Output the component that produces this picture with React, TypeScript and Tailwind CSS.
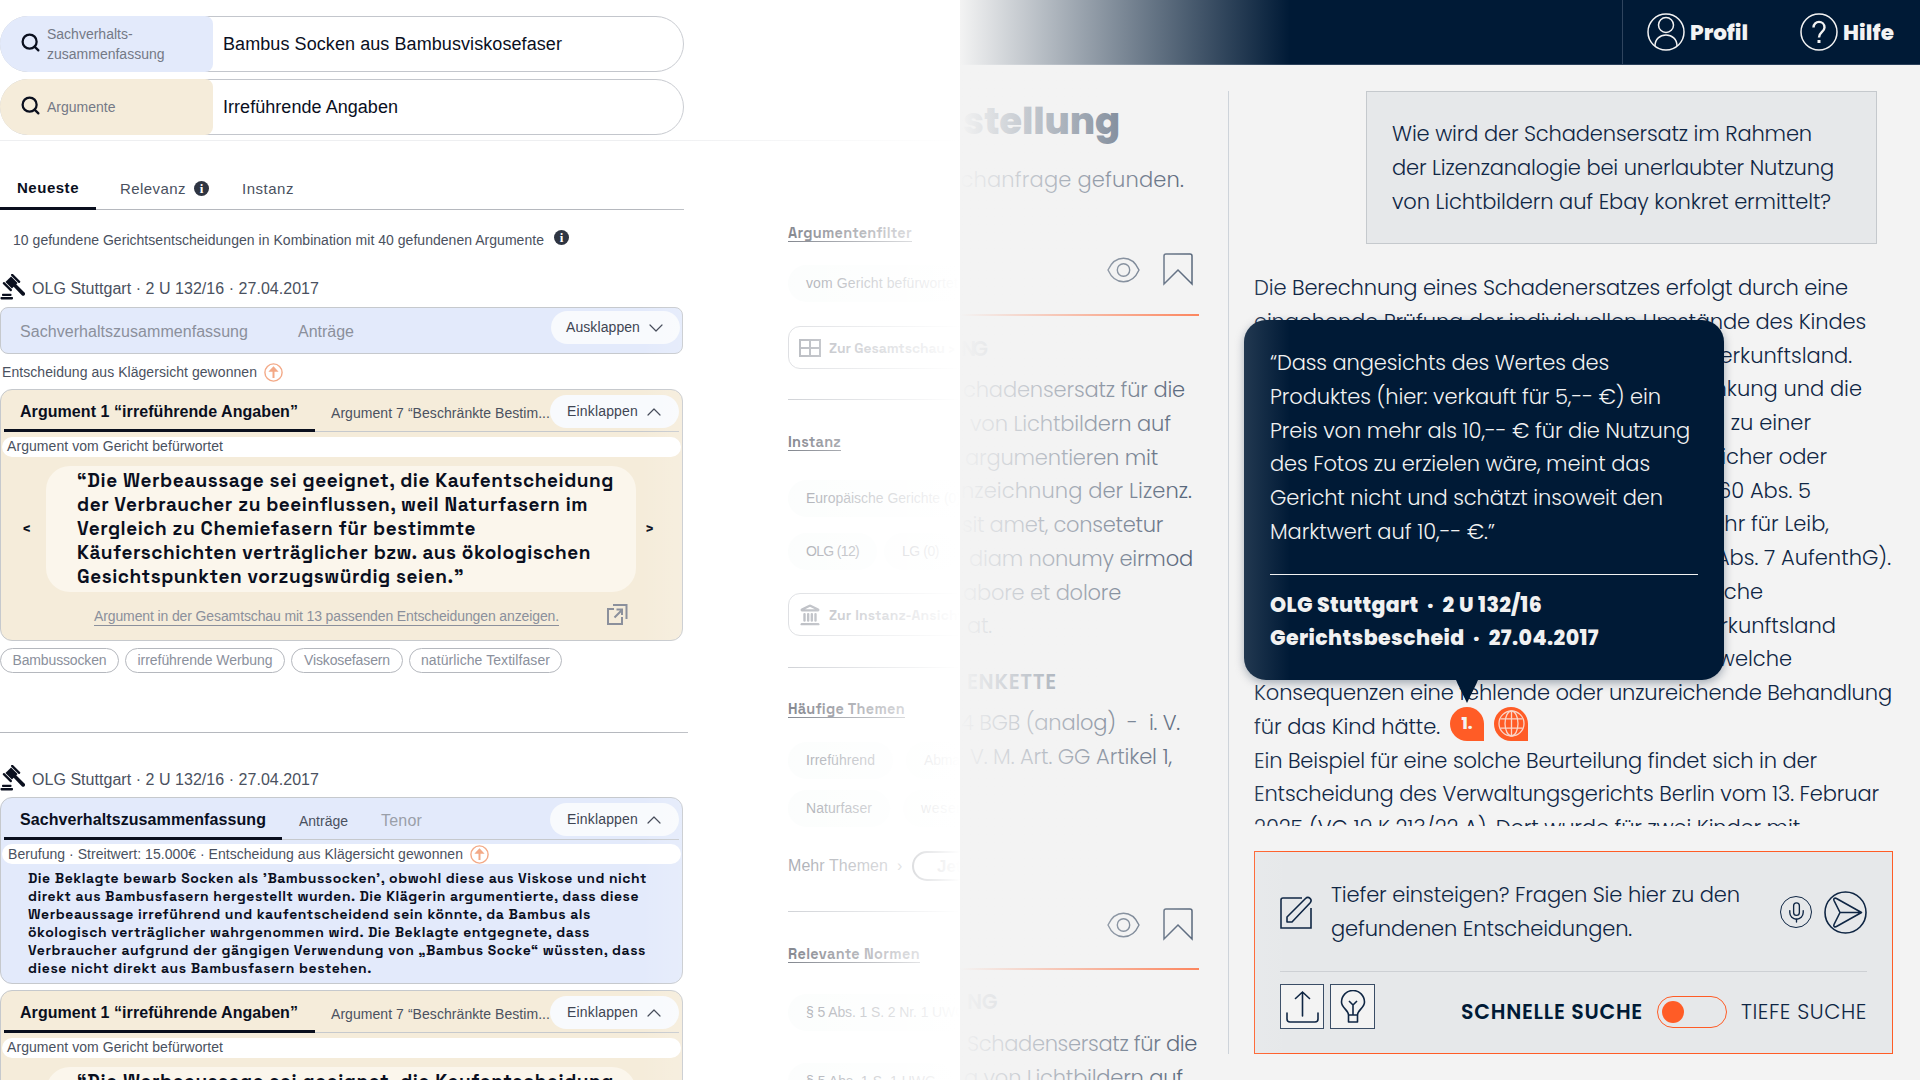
import { useLayoutEffect, useRef, useState, type ReactNode } from 'react';
import { Info, Search, ChevronDown, ChevronUp, Landmark, Mic } from 'lucide-react';

// One line of copy, tracked so that it fills the given width
function Line({ w, className = '', children }: { w: number; className?: string; children: ReactNode }) {
  const ref = useRef<HTMLSpanElement>(null);
  const [tracking, setTracking] = useState(0);

  useLayoutEffect(() => {
    const el = ref.current;
    if (!el) return;
    el.style.letterSpacing = '0px';
    const gap = w - el.getBoundingClientRect().width;
    setTracking(gap / (el.textContent?.length || 1));
  }, [w]);

  return (
    <span className={`block whitespace-pre ${className}`}>
      <span ref={ref} style={{ letterSpacing: `${tracking}px` }}>
        {children}
      </span>
    </span>
  );
}

type TextLine = [string, number];

const quoteLines: TextLine[] = [
  ['“Die Werbeaussage sei geeignet, die Kaufentscheidung', 537],
  ['der Verbraucher zu beeinflussen, weil Naturfasern im', 511],
  ['Vergleich zu Chemiefasern für bestimmte', 399],
  ['Käuferschichten verträglicher bzw. aus ökologischen', 514],
  ['Gesichtspunkten vorzugswürdig seien.”', 387],
];

const summaryLines: TextLine[] = [
  ['Die Beklagte bewarb Socken als ’Bambussocken’, obwohl diese aus Viskose und nicht', 619],
  ['direkt aus Bambusfasern hergestellt wurden. Die Klägerin argumentierte, dass diese', 611],
  ['Werbeaussage irreführend und kaufentscheidend sein könnte, da Bambus als', 563],
  ['ökologisch verträglicher wahrgenommen wird. Die Beklagte entgegnete, dass', 562],
  ['Verbraucher aufgrund der gängigen Verwendung von „Bambus Socke“ wüssten, dass', 618],
  ['diese nicht direkt aus Bambusfasern bestehen.', 344],
];

const tags: { label: string; w: number; box: string }[] = [
  { label: 'Bambussocken', w: 94, box: 'w-[119px]' },
  { label: 'irreführende Werbung', w: 135, box: 'w-[160px]' },
  { label: 'Viskosefasern', w: 86, box: 'w-[112px]' },
  { label: 'natürliche Textilfaser', w: 129, box: 'w-[153px]' },
];

const questionLines: TextLine[] = [
  ['Wie wird der Schadensersatz im Rahmen', 420],
  ['der Lizenzanalogie bei unerlaubter Nutzung', 442],
  ['von Lichtbildern auf Ebay konkret ermittelt?', 439],
];

const popupLines: TextLine[] = [
  ['“Dass angesichts des Wertes des', 339],
  ['Produktes (hier: verkauft für 5,-- €) ein', 391],
  ['Preis von mehr als 10,-- € für die Nutzung', 420],
  ['des Fotos zu erzielen wäre, meint das', 380],
  ['Gericht nicht und schätzt insoweit den', 393],
  ['Marktwert auf 10,-- €.”', 225],
];

// Lines that run behind the popup, right edge measured from the column start
const coveredLines: { text: string; width: string }[] = [
  { text: 'Herkunftsland.', width: 'w-[598px]' },
  { text: 'Erkrankung und die', width: 'w-[608px]' },
  { text: 'und zu einer', width: 'w-[557px]' },
  { text: 'erheblicher oder', width: 'w-[573px]' },
  { text: '§ 60 Abs. 5', width: 'w-[557px]' },
  { text: 'Gefahr für Leib,', width: 'w-[575px]' },
  { text: 'Abs. 7 AufenthG).', width: 'w-[637px]' },
  { text: 'solche', width: 'w-[509px]' },
  { text: 'Herkunftsland', width: 'w-[582px]' },
  { text: 'welche', width: 'w-[538px]' },
];

const excerptLines: { text: string; w: number; pad: string }[] = [
  { text: 'chadensersatz für die', w: 222, pad: 'pl-[3px]' },
  { text: 'von Lichtbildern auf', w: 201, pad: 'pl-[10px]' },
  { text: 'argumentieren mit', w: 193, pad: 'pl-[5px]' },
  { text: 'nzeichnung der Lizenz.', w: 231, pad: 'pl-[1px]' },
  { text: 'sit amet, consetetur', w: 201, pad: 'pl-[2px]' },
  { text: 'diam nonumy eirmod', w: 224, pad: 'pl-[9px]' },
  { text: 'abore et dolore', w: 158, pad: 'pl-[3px]' },
  { text: 'at.', w: 25, pad: 'pl-[7px]' },
];

function GavelIcon() {
  return (
    <svg className="h-[26px] w-[25px] shrink-0" viewBox="0 0 25 26" fill="#0a0f1e">
      <rect x="0.500" y="23" width="12.500" height="2.400" rx="0.800" />
      <rect x="2" y="19.800" width="9.500" height="2.200" rx="0.800" />
      <g transform="translate(11.5 8.5) rotate(-45)">
        <rect x="-4" y="-4.600" width="8" height="9.200" />
        <rect x="-7" y="-6" width="2.300" height="12" rx="1" />
        <rect x="4.700" y="-6" width="2.300" height="12" rx="1" />
      </g>
      <path d="M13 12l2.500-2.500 9 9a1.900 1.900 0 0 1-2.700 2.700z" />
    </svg>
  );
}

function InfoDot() {
  return (
    <span className="flex size-[15px] items-center justify-center rounded-full bg-[#2f3542] font-['Liberation_Serif',serif] text-[13px] leading-none font-bold text-white">
      i
    </span>
  );
}

function UpIcon() {
  return (
    <svg className="size-[19px]" viewBox="0 0 19 19" fill="none" stroke="#f3a987" strokeWidth="1.4">
      <circle cx="9.5" cy="9.5" r="8.6" />
      <path d="M9.5 15V5" strokeWidth="2" />
      <path d="M6 8l3.500-3.800L13 8z" fill="#f3a987" />
    </svg>
  );
}

function ExternalIcon() {
  return (
    <svg className="size-[22px]" viewBox="0 0 22 22" fill="none" stroke="#8b909c" strokeWidth="2">
      <path d="M8 5H2v15h14v-7" />
      <path d="M7 1h13.500v14M8.500 13.500L16 6M10.500 5.500H16V11" />
    </svg>
  );
}

function EyeIcon() {
  return (
    <svg className="h-[26px] w-[33px]" viewBox="0 0 33 26" fill="none" stroke="#1a2f4b" strokeWidth="1.4">
      <path d="M1 13C4.500 5.200 10 1.200 16.500 1.200S28.500 5.200 32 13C28.500 20.800 23 24.800 16.500 24.800S4.500 20.800 1 13z" />
      <circle cx="16.500" cy="13" r="6.200" />
    </svg>
  );
}

function BookmarkIcon() {
  return (
    <svg className="h-[33px] w-[30px]" viewBox="0 0 30 33" fill="none" stroke="#1a2f4b" strokeWidth="1.5">
      <path d="M1 31V3a2 2 0 0 1 2-2h24a2 2 0 0 1 2 2v28L15 17z" />
    </svg>
  );
}

function SearchBar({ label, value, w, tone }: { label: ReactNode; value: string; w: number; tone: string }) {
  return (
    <div className="flex h-[56px] w-[684px] items-center rounded-full border border-[#c3c6cc]">
      <div className={`-my-px -ml-px flex h-[56px] w-[213px] shrink-0 items-center gap-[6px] rounded-l-[28px] rounded-r-[8px] pl-[20px] ${tone}`}>
        <Search className="mb-[3px] size-[21px] text-[#0a0f1e]" strokeWidth={2.6} />
        <span className="text-[14px] leading-[20px] text-[#747986]">{label}</span>
      </div>
      <Line w={w} className="pl-[10px] text-[18px] leading-[24px] text-[#0a0f1e]">{value}</Line>
    </div>
  );
}

function CaseTitle() {
  return (
    <div className="flex h-[26px] items-center">
      <GavelIcon />
      <Line w={287} className="pl-[7px] pt-[3px] text-[16px] leading-[24px] text-[#4a5160]">
        OLG Stuttgart · 2 U 132/16 · 27.04.2017
      </Line>
    </div>
  );
}

function ToggleButton({ open }: { open: boolean }) {
  return (
    <div className="mr-[3px] ml-auto flex h-[33px] w-[129px] shrink-0 items-center rounded-full bg-[#f8fafd] pl-[17px] text-[14px] text-[#3f4553]">
      <Line w={open ? 71 : 74} className={open ? '' : '-ml-[2px]'}>{open ? 'Einklappen' : 'Ausklappen'}</Line>
      {open ? (
        <ChevronUp className="ml-[4px] size-[24px]" strokeWidth={1.2} />
      ) : (
        <ChevronDown className="ml-[4px] size-[24px]" strokeWidth={1.2} />
      )}
    </div>
  );
}

function ArgumentCard() {
  return (
    <div className="h-[252px] w-[683px] rounded-[12px] border border-[#c6c9cd] bg-[#f5ecda]">
      <div className="mr-[3px] ml-[3px] flex h-[42px] border-b border-[#c6c9cd]">
        <div className="h-[42px] w-[311px] border-b-[3px] border-[#0a0f1e] pt-[12px] pl-[16px]">
          <Line w={278} className="text-[16px] leading-[20px] font-bold text-[#0a0f1e]">
            Argument 1 “irreführende Angaben”
          </Line>
        </div>
        <Line w={219} className="pt-[13px] pl-[16px] text-[14px] leading-[20px] text-[#4a5160]">
          Argument 7 “Beschränkte Bestim...
        </Line>
        <div className="-mr-[3px] ml-auto pt-[5px]">
          <ToggleButton open />
        </div>
      </div>
      <div className="mx-[1px] mt-[5px] h-[20px] rounded-full bg-white pl-[5px]">
        <Line w={216} className="text-[14px] leading-[19px] text-[#4a5160]">Argument vom Gericht befürwortet</Line>
      </div>
      <div className="mt-[9px] flex items-center font-['Space_Grotesk','Inter',sans-serif] font-bold text-[#0a0f1e]">
        <span className="w-[45px] pl-[21px] text-[15px]">&lt;</span>
        <div className="h-[126px] w-[590px] rounded-[24px] bg-[#fbf6ec] pt-[3px] pl-[31px] text-[19px] leading-[24.100px]">
          {quoteLines.map(([text, w]) => (
            <Line key={text} w={w}>{text}</Line>
          ))}
        </div>
        <span className="pl-[9px] text-[15px]">&gt;</span>
      </div>
      <div className="mt-[12px] flex items-start pl-[93px]">
        <Line w={465} className="pt-[2px] text-[14px] leading-[20px] text-[#8b909c] underline underline-offset-[4px]">
          Argument in der Gesamtschau mit 13 passenden Entscheidungen anzeigen.
        </Line>
        <span className="ml-[47px]">
          <ExternalIcon />
        </span>
      </div>
    </div>
  );
}

function Results() {
  return (
    <div className="w-[688px] shrink-0">
      <div className="mt-[36px] flex h-[33px] w-[684px] border-b border-[#b5b8be] text-[15px] leading-[20px]">
        <div className="h-[33px] w-[96px] border-b-[3px] border-[#0a0f1e] pt-[1px] pl-[17px]">
          <Line w={62} className="font-bold text-[#0a0f1e]">Neueste</Line>
        </div>
        <div className="flex pt-[2px] pl-[24px] text-[#4a5160]">
          <Line w={66}>Relevanz</Line>
          <span className="mt-[2px] ml-[8px]">
            <InfoDot />
          </span>
          <Line w={52} className="pl-[33px]">Instanz</Line>
        </div>
      </div>
      <div className="mt-[20px] flex h-[20px] pl-[13px]">
        <Line w={531} className="text-[14px] leading-[20px] text-[#4a5160]">
          10 gefundene Gerichtsentscheidungen in Kombination mit 40 gefundenen Argumente
        </Line>
        <span className="ml-[10px]">
          <InfoDot />
        </span>
      </div>
      <div className="mt-[24px]">
        <CaseTitle />
      </div>
      <div className="mt-[7px] flex h-[47px] w-[683px] rounded-[8px] border border-[#c6c9cd] bg-[#e3eafb]">
        <Line w={228} className="pt-[14px] pl-[19px] text-[16px] leading-[20px] text-[#8b909c]">
          Sachverhaltszusammenfassung
        </Line>
        <Line w={56} className="pt-[14px] pl-[50px] text-[16px] leading-[20px] text-[#8b909c]">Anträge</Line>
        <div className="-mr-[1px] ml-auto pt-[3px]">
          <ToggleButton open={false} />
        </div>
      </div>
      <div className="mt-[8px] flex h-[20px] items-center gap-[7px] pl-[2px]">
        <Line w={255} className="text-[14px] leading-[20px] text-[#4a5160]">Entscheidung aus Klägersicht gewonnen</Line>
        <UpIcon />
      </div>
      <div className="mt-[7px]">
        <ArgumentCard />
      </div>
      <div className="mt-[7px] flex gap-[6px]">
        {tags.map((tag) => (
          <div key={tag.label} className={`flex h-[25px] justify-center rounded-full border border-[#b5b8be] ${tag.box}`}>
            <Line w={tag.w} className="text-[14px] leading-[22px] text-[#8b909c]">{tag.label}</Line>
          </div>
        ))}
      </div>
      <div className="mt-[59px] border-t border-[#b5b8be]" />
      <div className="mt-[32px]">
        <CaseTitle />
      </div>
      <div className="mt-[6px] h-[187px] w-[683px] rounded-[12px] border border-[#c6c9cd] bg-[#e3eafb]">
        <div className="mr-[3px] ml-[3px] flex h-[42px] border-b border-[#c6c9cd]">
          <div className="h-[42px] w-[278px] border-b-[3px] border-[#0a0f1e] pt-[12px] pl-[16px]">
            <Line w={246} className="text-[16px] leading-[20px] font-bold text-[#0a0f1e]">
              Sachverhaltszusammenfassung
            </Line>
          </div>
          <Line w={49} className="pt-[13px] pl-[17px] text-[14px] leading-[20px] text-[#4a5160]">Anträge</Line>
          <Line w={41} className="pt-[13px] pl-[33px] text-[16px] leading-[20px] text-[#9a9fa9]">Tenor</Line>
          <div className="-mr-[3px] ml-auto pt-[5px]">
            <ToggleButton open />
          </div>
        </div>
        <div className="mx-[1px] mt-[4px] flex h-[20px] items-center gap-[7px] rounded-full bg-white pl-[6px]">
          <Line w={455} className="text-[14px] leading-[20px] text-[#4a5160]">
            Berufung · Streitwert: 15.000€ · Entscheidung aus Klägersicht gewonnen
          </Line>
          <UpIcon />
        </div>
        <div className="pt-[5px] pl-[27px] font-['Space_Grotesk','Inter',sans-serif] text-[14px] leading-[18.100px] font-bold text-[#0a0f1e]">
          {summaryLines.map(([text, w]) => (
            <Line key={text} w={w}>{text}</Line>
          ))}
        </div>
      </div>
      <div className="mt-[6px]">
        <ArgumentCard />
      </div>
    </div>
  );
}

function FilterHeading({ children, w }: { children: string; w: number }) {
  return (
    <Line w={w} className="font-['Space_Grotesk','Inter',sans-serif] text-[14.500px] leading-[20px] font-bold text-[#1a2130] underline underline-offset-[3px]">
      {children}
    </Line>
  );
}

function Chip({ children, w }: { children: string; w: number }) {
  return (
    <div className="h-[37px] shrink-0 rounded-full bg-[#f9fcfb] px-[18px]">
      <Line w={w} className="text-[14px] leading-[37px] text-[#5f6571]">{children}</Line>
    </div>
  );
}

function FilterButton({ icon, children, w }: { icon: ReactNode; children: string; w: number }) {
  return (
    <div className="flex h-[43px] w-[220px] items-center gap-[8px] rounded-[12px] border-[1.500px] border-[#c3c6cc] pl-[10px] text-[#7c818c]">
      {icon}
      <Line w={w} className="font-['Space_Grotesk','Inter',sans-serif] text-[14px] leading-[20px] font-bold">{children}</Line>
    </div>
  );
}

function Filters() {
  return (
    <div className="ml-[100px] h-[939px] w-[172px] overflow-hidden whitespace-nowrap">
      <div className="pt-[82px]">
        <FilterHeading w={124}>Argumentenfilter</FilterHeading>
      </div>
      <div className="mt-[22px] flex">
        <Chip w={152}>vom Gericht befürwortet</Chip>
      </div>
      <div className="mt-[24px]">
        <FilterButton
          w={126}
          icon={
            <svg className="h-[18px] w-[22px] shrink-0" viewBox="0 0 22 18" fill="none" stroke="currentColor" strokeWidth="2">
              <path d="M1 1h20v16H1zM11 1v16M1 9h20" />
            </svg>
          }
        >
          Zur Gesamtschau ›
        </FilterButton>
      </div>
      <div className="mt-[30px] border-t-[1.500px] border-[#a9adb5]" />
      <div className="mt-[32px]">
        <FilterHeading w={53}>Instanz</FilterHeading>
      </div>
      <div className="mt-[28px] flex">
        <Chip w={155}>Europäische Gerichte (0)</Chip>
      </div>
      <div className="mt-[16px] flex gap-[7px]">
        <Chip w={53}>OLG (12)</Chip>
        <Chip w={37}>LG (0)</Chip>
      </div>
      <div className="mt-[23px]">
        <FilterButton w={135} icon={<Landmark className="size-[22px] shrink-0" strokeWidth={2.6} />}>
          Zur Instanz-Ansicht
        </FilterButton>
      </div>
      <div className="mt-[31px] border-t-[1.500px] border-[#a9adb5]" />
      <div className="mt-[31px]">
        <FilterHeading w={117}>Häufige Themen</FilterHeading>
      </div>
      <div className="mt-[23px] flex gap-[13px]">
        <Chip w={69}>Irreführend</Chip>
        <Chip w={74}>Abmahnung</Chip>
      </div>
      <div className="mt-[11px] flex gap-[13px]">
        <Chip w={66}>Naturfaser</Chip>
        <Chip w={72}>wesentlich</Chip>
      </div>
      <div className="mt-[24px] flex h-[30px] items-center">
        <Line w={100} className="text-[16px] text-[#5f6571]">Mehr Themen</Line>
        <span className="w-[24px] shrink-0 pl-[9px] text-[16px] text-[#5f6571]">›</span>
        <div className="h-[30px] w-[110px] shrink-0 rounded-full border-2 border-[#1a2130] pl-[23px] text-[17px] leading-[27px] font-bold text-[#1a2130]">
          Jetzt
        </div>
      </div>
      <div className="mt-[30px] border-t-[1.500px] border-[#a9adb5]" />
      <div className="mt-[32px]">
        <FilterHeading w={132}>Relevante Normen</FilterHeading>
      </div>
      <div className="mt-[30px] flex">
        <Chip w={160}>§ 5 Abs. 1 S. 2 Nr. 1 UWG</Chip>
      </div>
      <div className="mt-[32px] flex">
        <Chip w={130}>§ 5 Abs. 1 S. 1 UWG</Chip>
      </div>
    </div>
  );
}

function ExcerptActions() {
  return (
    <div className="flex items-center gap-[23px] pl-[147px]">
      <EyeIcon />
      <BookmarkIcon />
    </div>
  );
}

function Excerpt() {
  return (
    <div className="h-[1015px] w-[268px] shrink-0 overflow-hidden text-[#0f2644]">
      <Line w={157} className="pt-[28px] pl-[3px] text-[37px] leading-[56px] font-extrabold">stellung</Line>
      <Line w={237} className="-ml-[13px] pt-[14px] leading-[34px]">uchanfrage gefunden.</Line>
      <div className="mt-[56px]">
        <ExcerptActions />
      </div>
      <div className="mt-[28px] h-[2px] w-[239px] bg-[#ff5c26]" />
      <div className="mt-[16px] pl-[1px] text-[20.500px] leading-[34px] font-semibold opacity-60">
        <Line w={23}>NG</Line>
      </div>
      <div className="mt-[7px]">
        {excerptLines.map((line) => (
          <Line key={line.text} w={line.w} className={line.pad}>{line.text}</Line>
        ))}
      </div>
      <Line w={90} className="pt-[22px] pl-[7px] text-[20.500px] font-semibold">ENKETTE</Line>
      <Line w={219} className="pt-[7px] pl-[1px]">4 BGB (analog)  -  i. V.</Line>
      <Line w={202} className="pl-[10px]">V. M. Art. GG Artikel 1,</Line>
      <div className="mt-[135px]">
        <ExcerptActions />
      </div>
      <div className="mt-[27px] h-[2px] w-[239px] bg-[#ff5c26]" />
      <div className="mt-[15px] pl-[7px] text-[20.500px] leading-[34px] font-semibold opacity-60">
        <Line w={30}>NG</Line>
      </div>
      <div className="mt-[8px]">
        <Line w={230} className="pl-[7px]">Schadensersatz für die</Line>
        <Line w={219} className="pl-[4px]">g von Lichtbildern auf</Line>
      </div>
    </div>
  );
}

function SourcePopup() {
  return (
    <div className="absolute top-[229px] left-[15px] h-[360px] w-[480px] rounded-[22px] bg-[#001a36] px-[26px] pt-[26px] text-[#f1f1f1] shadow-[0_3px_10px_rgba(0,26,54,0.35)]">
      {popupLines.map(([text, w]) => (
        <Line key={text} w={w}>{text}</Line>
      ))}
      <div className="mt-[25px] mb-[13px] border-t border-[#f1f1f1]" />
      <Line w={272} className="text-[20.500px] font-extrabold">OLG Stuttgart  ·  2 U 132/16</Line>
      <Line w={329} className="text-[20.500px] font-extrabold">Gerichtsbescheid  ·  27.04.2017</Line>
      <svg className="absolute top-[359px] left-[210px] h-[24px] w-[26px]" viewBox="0 0 26 24" fill="#001a36">
        <path d="M0 0h26c-2 0-2.500 2-3.500 4.500L13 24 3.500 4.500C2.500 2 2 0 0 0z" />
      </svg>
    </div>
  );
}

function Composer() {
  return (
    <div className="mt-[25px] ml-[25px] h-[203px] w-[639px] border-[1.500px] border-[#ff5c26] bg-[#e6e8ea] px-[25px] pt-[26px]">
      <div className="flex h-[68px] items-center">
        <svg className="h-[33px] w-[32px] shrink-0" viewBox="0 0 32 33" fill="none" stroke="#0f2644" strokeWidth="1.600">
          <path d="M22 2H3a2 2 0 0 0-2 2v28h30V12" />
          <path d="M7 26v-5L25.500 2.500c3-3 7.500 1 4.500 4.500L12 26z" strokeLinejoin="round" />
        </svg>
        <div className="pl-[19px]">
          <Line w={409}>Tiefer einsteigen? Fragen Sie hier zu den</Line>
          <Line w={301}>gefundenen Entscheidungen.</Line>
        </div>
        <div className="ml-auto flex items-center gap-[12px]">
          <span className="flex size-[32px] items-center justify-center rounded-full border-[1.500px] border-[#0f2644]">
            <Mic className="size-[23px]" strokeWidth={1.4} />
          </span>
          <svg className="size-[43px]" viewBox="0 0 43 43" fill="none" stroke="#0f2644" strokeWidth="1.600" strokeLinejoin="round">
            <circle cx="21.500" cy="21.500" r="20.500" />
            <path d="M37.500 21.500L12.500 7.500c-1.800-1-3.300.300-2.500 2l6 12-6 12c-.800 1.700.700 3 2.500 2zM16 21.500h21.500" />
          </svg>
        </div>
      </div>
      <div className="mt-[25px] border-t-[1.500px] border-[#cdd0d4]" />
      <div className="mt-[12px] flex h-[45px]">
        <div className="mr-[6px] flex h-[45px] w-[44px] items-center justify-center border-[1.500px] border-[#3a4d66] bg-[#f3f3f3]">
          <svg className="h-[33px] w-[33px]" viewBox="0 0 33 33" fill="none" stroke="#0f2644" strokeWidth="1.600" strokeLinecap="round">
            <path d="M1 23v6a3 3 0 0 0 3 3h25a3 3 0 0 0 3-3v-6M16.500 26V2M9.500 8.500l7-6.500 7 6.500" />
          </svg>
        </div>
        <div className="flex size-[45px] items-center justify-center border-[1.500px] border-[#3a4d66] bg-[#f3f3f3]">
          <svg className="h-[33px] w-[26px]" viewBox="0 0 26 33" fill="none" stroke="#0f2644" strokeWidth="1.600" strokeLinejoin="round">
            <path d="M8.500 25c0-5-7-7-7-13a11.500 11.500 0 0 1 23 0c0 6-7 8-7 13zM8.500 25v7h9v-7M13 25V15M9 11l4 4 4-4" />
          </svg>
        </div>
        <div className="ml-auto flex items-center pt-[11px]">
          <Line w={182} className="text-[20.500px] font-semibold text-[#001a36]">SCHNELLE SUCHE</Line>
          <div className="mx-[14px] flex h-[32px] w-[70px] items-center rounded-full border-[1.500px] border-[#ff5c26] pl-[4px]">
            <span className="size-[22px] rounded-full bg-[#ff5c26]" />
          </div>
          <Line w={126}>TIEFE SUCHE</Line>
        </div>
      </div>
    </div>
  );
}

function Chat() {
  return (
    <div className="relative mt-[26px] h-[963px] border-l border-[#c5ccd4]">
      <div className="ml-[137px] h-[153px] w-[511px] border border-[#c5c9cd] bg-[#e6e8ea] pt-[25px] pl-[25px]">
        {questionLines.map(([text, w]) => (
          <Line key={text} w={w}>{text}</Line>
        ))}
      </div>
      <div className="mt-[27px] ml-[25px] h-[555px] overflow-hidden">
        <Line w={594}>Die Berechnung eines Schadenersatzes erfolgt durch eine</Line>
        <Line w={612}>eingehende Prüfung der individuellen Umstände des Kindes</Line>
        {coveredLines.map((line) => (
          <p key={line.text} className={`text-right ${line.width}`}>{line.text}</p>
        ))}
        <Line w={638}>Konsequenzen eine fehlende oder unzureichende Behandlung</Line>
        <div className="flex h-[33.750px]">
          <Line w={186}>für das Kind hätte.</Line>
          <span className="mt-[-3px] ml-[10px] flex size-[34px] items-center justify-center rounded-full rounded-br-none bg-[#ff5c26] text-[16px] font-extrabold text-[#f3f3f3]">
            1.
          </span>
          <span className="mt-[-3px] ml-[10px] flex size-[34px] items-center justify-center rounded-full rounded-br-none bg-[#ff5c26]">
            <svg className="size-[27px]" viewBox="0 0 27 27" fill="none" stroke="#f9d6c9" strokeWidth="1.300">
              <circle cx="13.500" cy="13.500" r="12.500" />
              <ellipse cx="13.500" cy="13.500" rx="6.500" ry="12.500" />
              <path d="M13.500 1v25M2.500 8.800h22M2.500 18.200h22" />
            </svg>
          </span>
        </div>
        <Line w={563}>Ein Beispiel für eine solche Beurteilung findet sich in der</Line>
        <Line w={625}>Entscheidung des Verwaltungsgerichts Berlin vom 13. Februar</Line>
        <Line w={546}>2025 (VG 19 K 213/22 A). Dort wurde für zwei Kinder mit</Line>
      </div>
      <SourcePopup />
      <Composer />
    </div>
  );
}

export default function App() {
  return (
    <div className="flex h-[1080px] w-[1920px] overflow-hidden bg-white">
      {/* Search and filters */}
      <section className="relative h-[1080px] w-[960px] shrink-0 overflow-hidden font-['Liberation_Sans',Arial,sans-serif]">
        <div className="h-[141px] border-b border-[#eeeff1] pt-[16px]">
          <SearchBar
            w={339}
            tone="bg-[#e3eafb]"
            value="Bambus Socken aus Bambusviskosefaser"
            label={
              <>
                Sachverhalts-
                <br />
                zusammenfassung
              </>
            }
          />
          <div className="mt-[7px]">
            <SearchBar w={175} tone="bg-[#f5ecda]" value="Irreführende Angaben" label="Argumente" />
          </div>
        </div>
        <div className="flex">
          <Results />
          <Filters />
        </div>
        <div className="pointer-events-none absolute inset-y-0 left-[640px] w-[320px] bg-linear-to-r from-white/0 to-white" />
      </section>

      {/* Decision and chat */}
      <section className="relative h-[1080px] w-[960px] shrink-0 overflow-hidden bg-[#f3f3f3] font-['Poppins','Inter',sans-serif] text-[21px] leading-[33.750px] font-light text-[#0f2644]">
        <header className="flex h-[65px] justify-end border-b border-[#2a405a] bg-[#001a36] text-[#f3f3f3]">
          <div className="flex h-full w-[298px] items-center border-l border-[#2f445e] pl-[24px]">
            <svg className="size-[38px]" viewBox="0 0 38 38" fill="none" stroke="#f3f3f3" strokeWidth="1.500">
              <circle cx="19" cy="19" r="18" />
              <circle cx="19" cy="12" r="7.500" />
              <path d="M8 33c0-7 5-11 11-11s11 4 11 11" />
            </svg>
            <Line w={58} className="pt-[1px] pl-[5px] text-[21.500px] font-extrabold">Profil</Line>
            <svg className="ml-[52px] size-[38px]" viewBox="0 0 38 38" fill="none" stroke="#f3f3f3" strokeWidth="1.500">
              <circle cx="19" cy="19" r="18" />
              <path d="M13.500 14.500c0-7.500 11-7.500 11 0 0 4.500-5.500 4.500-5.500 10" strokeWidth="2.400" />
              <path d="M17.500 27h3v3h-3z" fill="#f3f3f3" stroke="none" />
            </svg>
            <Line w={51} className="pt-[1px] pl-[5px] text-[21.500px] font-extrabold">Hilfe</Line>
          </div>
        </header>
        <div className="flex">
          <Excerpt />
          <Chat />
        </div>
        <div className="pointer-events-none absolute inset-y-0 left-0 w-[330px] bg-linear-to-r from-[#f3f3f3] to-[#f3f3f3]/0" />
      </section>
    </div>
  );
}
